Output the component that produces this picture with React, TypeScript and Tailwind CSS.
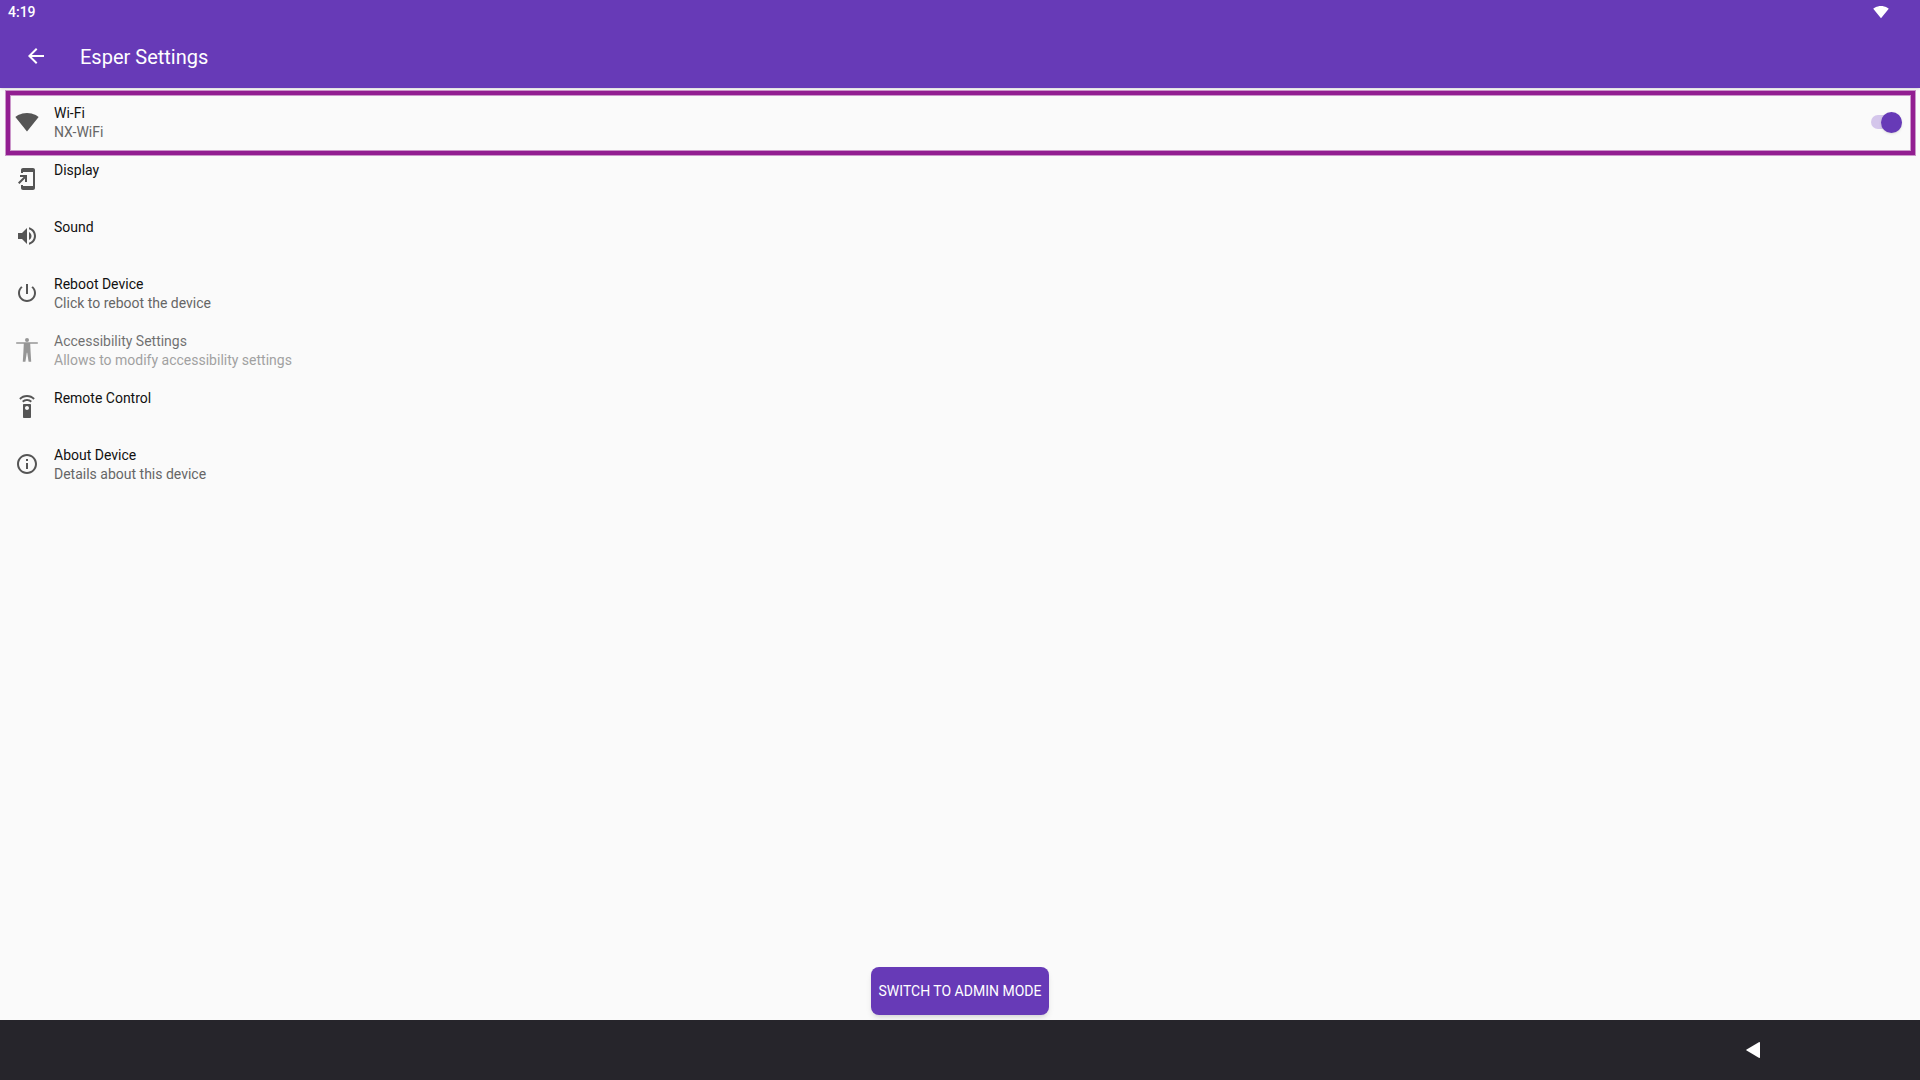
import type { ReactNode } from "react"

interface SettingRow {
  title: string
  subtitle?: string
  icon: ReactNode
  disabled?: boolean
}

function Icon({ d, className = "size-6" }: { d: string; className?: string }) {
  return (
    <svg viewBox="0 0 24 24" className={className} fill="currentColor" aria-hidden="true">
      <path d={d} />
    </svg>
  )
}

const WIFI = "M12.01 21.49L23.64 7c-.45-.34-4.93-4-11.64-4C5.28 3 .81 6.66.36 7l11.63 14.49.01.01.01-.01z"
const BACK = "M20 11H7.83l5.59-5.59L12 4l-8 8 8 8 1.41-1.41L7.83 13H20v-2z"
const DISPLAY =
  "M18 1.01L8 1c-1.1 0-2 .9-2 2v3h2V5h10v14H8v-1H6v3c0 1.1.9 2 2 2h10c1.1 0 2-.9 2-2V3c0-1.1-.9-1.99-2-1.99zM10 15h2V8H5v2h3.59L3 15.59 4.41 17 10 11.41V15z"
const SOUND =
  "M3 9v6h4l5 5V4L7 9H3zm13.5 3c0-1.77-1.02-3.29-2.5-4.03v8.05c1.48-.73 2.5-2.25 2.5-4.02zM14 3.23v2.06c2.89.86 5 3.54 5 6.71s-2.11 5.85-5 6.71v2.06c4.01-.91 7-4.49 7-8.77s-2.99-7.86-7-8.77z"
const POWER =
  "M13 3h-2v10h2V3zm4.83 2.17l-1.42 1.42C17.99 7.86 19 9.81 19 12c0 3.87-3.13 7-7 7s-7-3.13-7-7c0-2.19 1.01-4.14 2.58-5.42L6.17 5.17C4.23 6.82 3 9.26 3 12c0 4.97 4.03 9 9 9s9-4.03 9-9c0-2.74-1.23-5.18-3.17-6.83z"
const REMOTE =
  "M15 9H9c-.55 0-1 .45-1 1v12c0 .55.45 1 1 1h6c.55 0 1-.45 1-1V10c0-.55-.45-1-1-1zm-3 6c-1.1 0-2-.9-2-2s.9-2 2-2 2 .9 2 2-.9 2-2 2zM7.05 6.05l1.41 1.41C9.37 6.56 10.62 6 12 6s2.63.56 3.54 1.46l1.41-1.41C15.68 4.78 13.93 4 12 4s-3.68.78-4.95 2.05zM12 0C8.96 0 6.21 1.23 4.22 3.22l1.41 1.41C7.26 3.01 9.51 2 12 2s4.74 1.01 6.36 2.64l1.41-1.41C17.79 1.23 15.04 0 12 0z"
const INFO =
  "M11 17h2v-6h-2v6zm1-15C6.48 2 2 6.48 2 12s4.48 10 10 10 10-4.48 10-10S17.52 2 12 2zm0 18c-4.41 0-8-3.59-8-8s3.59-8 8-8 8 3.59 8 8-3.59 8-8 8zM11 9h2V7h-2v2z"

function PersonIcon() {
  return (
    <svg viewBox="0 0 24 24" className="size-6" fill="currentColor" aria-hidden="true">
      <circle cx="12" cy="2" r="2" />
      <path d="M1.2 4.2h21.6v1.6h-7.6l.4 8 .6 10h-2.6l-1.4-9h-.4l-1.4 9H7.8l.6-10 .4-8H1.2z" />
    </svg>
  )
}

const ROWS: SettingRow[] = [
  { title: "Display", icon: <Icon d={DISPLAY} /> },
  { title: "Sound", icon: <Icon d={SOUND} /> },
  { title: "Reboot Device", subtitle: "Click to reboot the device", icon: <Icon d={POWER} /> },
  {
    title: "Accessibility Settings",
    subtitle: "Allows to modify accessibility settings",
    icon: <PersonIcon />,
    disabled: true,
  },
  { title: "Remote Control", icon: <Icon d={REMOTE} /> },
  { title: "About Device", subtitle: "Details about this device", icon: <Icon d={INFO} /> },
]

function RowBody({ title, subtitle, icon }: SettingRow) {
  return (
    <>
      <span className="text-[#555555]">{icon}</span>
      <span className="flex h-9 flex-1 flex-col text-sm leading-[19px]">
        <span className="text-[#111111]">{title}</span>
        {subtitle && <span className="text-[#666666]">{subtitle}</span>}
      </span>
    </>
  )
}

export default function App() {
  return (
    <div className="flex min-h-screen flex-col bg-[#fafafa] font-[Roboto,sans-serif]">
      <header className="bg-[#673ab7] text-white shadow">
        <div className="flex h-6 items-center justify-between pr-[31px] pl-2">
          <span className="text-sm font-medium">4:19</span>
          <Icon d={WIFI} className="size-4" />
        </div>
        <div className="flex h-16 items-center gap-8 px-6">
          <button type="button" aria-label="Back">
            <Icon d={BACK} />
          </button>
          <h1 className="pt-0.5 text-xl">Esper Settings</h1>
        </div>
      </header>

      <main className="flex flex-1 flex-col pt-1.5">
        <ul className="flex flex-col gap-px">
          <li className="relative">
            <label className="flex h-14 items-center gap-[15px] pr-[18px] pl-[15px]">
              <RowBody title="Wi-Fi" subtitle="NX-WiFi" icon={<Icon d={WIFI} />} />
              <input type="checkbox" role="switch" aria-label="Wi-Fi" defaultChecked className="peer sr-only" />
              <span className="flex h-3.5 w-[31px] items-center rounded-full bg-[#d4c6eb] peer-checked:justify-end">
                <span className="size-[21px] shrink-0 rounded-full bg-[#673ab7] shadow-sm" />
              </span>
            </label>
            <div className="pointer-events-none absolute -top-[3px] right-[5px] -bottom-[5px] left-1.5 border-4 border-[#921e91] ring-1 inset-ring-1 ring-[#921e91]/45 inset-ring-[#921e91]/45" />
          </li>
          {ROWS.map((row) => (
            <li key={row.title}>
              <button
                type="button"
                disabled={row.disabled}
                className="flex h-14 w-full items-center gap-[15px] px-[15px] text-left disabled:opacity-60"
              >
                <RowBody {...row} />
              </button>
            </li>
          ))}
        </ul>
        <button
          type="button"
          className="mx-auto mt-auto mb-[5px] h-12 rounded-lg bg-[#673ab7] px-2 text-sm text-white uppercase shadow-md"
        >
          Switch to admin mode
        </button>
      </main>

      <nav className="flex h-[60px] items-center justify-end bg-[#26252b] pr-40">
        <button type="button" aria-label="Navigate back" className="text-white">
          <svg viewBox="0 0 14 16" className="h-4 w-3.5" fill="currentColor" aria-hidden="true">
            <path d="M14 .8v14.4a.8.8 0 0 1-1.2.6L.6 8.6a.7.7 0 0 1 0-1.2L12.8.2A.8.8 0 0 1 14 .8z" />
          </svg>
        </button>
      </nav>
    </div>
  )
}
